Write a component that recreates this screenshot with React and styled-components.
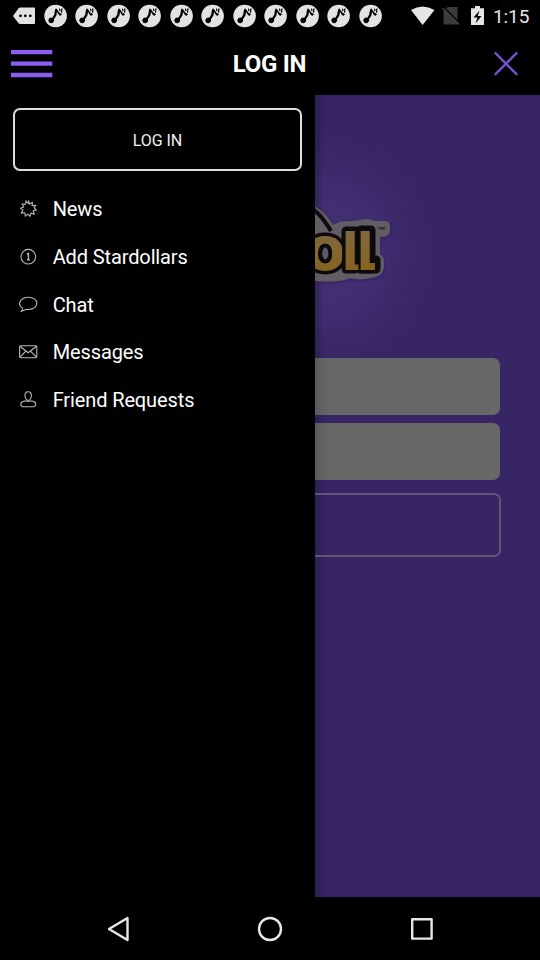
import React from "react";
import styled, { createGlobalStyle } from "styled-components";

const GlobalStyle = createGlobalStyle`
  * { box-sizing: border-box; }
  body { margin: 0; background: #000; font-family: Roboto, sans-serif; color: #fff; }
`;

const Screen = styled.div`
  width: 540px;
  height: 960px;
  display: flex;
  flex-direction: column;
  background: #000;
  overflow: hidden;
`;

const StatusBar = styled.div`
  height: 32px;
  flex: none;
  display: flex;
  align-items: center;
  padding: 0 10px 0 12px;
`;

const Notifications = styled.div`
  display: flex;
  align-items: center;
  gap: 7.5px;
  flex: 1;
  svg { display: block; flex: none; }
`;

const SystemIcons = styled.div`
  display: flex;
  align-items: center;
  svg { display: block; }
`;

const Clock = styled.span`
  font-size: 19px;
  line-height: 32px;
  color: #e6e6e6;
  margin: 1px 0 0 9px;
  width: 37px;
  letter-spacing: -0.1px;
  white-space: nowrap;
`;

const Header = styled.header`
  height: 63px;
  flex: none;
  display: grid;
  grid-template-columns: 100px 1fr 100px;
  align-items: center;
  padding: 0 22px 0 11px;
`;

const IconButton = styled.button`
  border: 0;
  padding: 0;
  background: none;
  display: flex;
  justify-content: ${(p) => (p.$end ? "flex-end" : "flex-start")};
`;

const Title = styled.h1`
  margin: 1px 0 0 10px;
  font-size: 24px;
  line-height: 32px;
  font-weight: 700;
  letter-spacing: -0.3px;
  text-align: center;
`;

const Body = styled.main`
  height: 802px;
  flex: none;
  display: flex;
`;

const Drawer = styled.aside`
  width: 315px;
  flex: none;
  padding: 13px 13px 0;
`;

const LoginButton = styled.button`
  display: block;
  width: 289px;
  height: 63px;
  padding: 2px 0 0;
  border: 2px solid #ddd;
  border-radius: 7px;
  background: #000;
  color: #f2f2f2;
  font: 400 16px/20px Roboto, sans-serif;
  letter-spacing: -0.05px;
`;

const Menu = styled.nav`
  margin-top: 14.7px;
`;

const MenuItem = styled.div`
  height: 47.6px;
  display: flex;
  align-items: center;
  font-size: 20px;
  letter-spacing: -0.12px;
  white-space: nowrap;
  svg { display: block; margin: 0 13.7px 0 5px; }
`;

const Content = styled.section`
  flex: 1;
  overflow: hidden;
  background:
    linear-gradient(90deg, rgba(0, 0, 0, 0.2), transparent 10px),
    radial-gradient(circle at 0 157px, #453273 0, #402c70 70px, #3a2868 95px, #372565 125px);
  svg { display: block; }
`;

const Field = styled.div`
  width: 185px;
  height: 57px;
  margin-bottom: 8px;
  border-radius: 0 7px 7px 0;
  background: linear-gradient(90deg, #5a5a5a 0, #676767 15px);
`;

const OutlineButton = styled.div`
  width: 186px;
  height: 64px;
  margin-top: 13px;
  border: 2px solid #625777;
  border-left: 0;
  border-radius: 0 7px 7px 0;
`;

const NavBar = styled.footer`
  flex: 1;
  display: flex;
  justify-content: center;
  align-items: center;
  gap: 124px;
  svg { display: block; }
`;

const Message = () => (
  <svg width="24" height="24" viewBox="0 0 24 24">
    <path d="M1 12 6.5 4.2Q7.3 3.4 8.3 3.4H22Q23 3.4 23 4.4V19.2Q23 20 22 20H8.3Q7.2 20 6.5 19.2Z" fill="#e2e2e2" />
    <circle cx="8.5" cy="11.8" r="1.4" />
    <circle cx="13.3" cy="11.8" r="1.4" />
    <circle cx="18.3" cy="11.8" r="1.4" />
  </svg>
);

const Note = () => (
  <svg width="24" height="24" viewBox="0.4 0 24 24">
    <circle cx="12" cy="12" r="11.3" fill="#e2e2e2" />
    <g fill="#000" stroke="#000" strokeLinecap="round">
      <circle cx="7.6" cy="16.4" r="2.4" />
      <path d="m8.8 15.6 2.9-4.6.8-4.6" fill="none" strokeWidth="2.3" />
      <path d="m12.5 5.4 3.3 4.6" fill="none" strokeWidth="1.6" />
      <circle cx="16.6" cy="10.4" r="0.9" />
      <path d="m16 5.2 .3 1.400m2-1.800-.3 3.400" fill="none" strokeWidth="1.2" />
    </g>
  </svg>
);

const icons = {
  News: (
    <path d="m12.7 4.400.7 3.200 3-1.900-.3 3.400 3.800-.4-1.900 2.700 2.300 2-3.200.8 1.300 3.400-3.600-.9-.8 3.200-2.200-2.300-2.500 2.100-.4-3.500-3.600.4 1.700-3-2.500-1.900 3.200-1.200-1.600-3 3.500.3.300-3.400 2.400 2.400Z" transform="translate(0 -.5)" />
  ),
  "Add Stardollars": (
    <>
      <circle cx="12.3" cy="11.7" r="7.3" />
      <path d="M10.9 9 12.4 8.300V14.700M11 14.900h3" strokeWidth="1.4" />
    </>
  ),
  Chat: (
    <path d="M6.400 15.100C.3 11.100 5.200 4.200 12.300 4.200c4.900 0 8.500 2.600 8.500 5.900 0 4.800-5.600 7.100-10.300 6.100L4.900 18.600c1-1 1.900-2.200 1.500-3.500Z" />
  ),
  Messages: (
    <>
      <rect x="3.6" y="5.7" width="17.2" height="12" rx="1.2" />
      <path d="m4 6.200 8.200 6.600 8.200-6.600M4 17.200l5.800-6.100m4.600.1 6.200 6" />
    </>
  ),
  "Friend Requests": (
    <>
      <path d="M12.200 3.700c2.200 0 3.400 1.700 3.200 4.200-.2 2.200-1.600 4.600-3.200 4.600S9.200 10.100 9 7.900c-.2-2.500 1-4.200 3.200-4.200Z" />
      <path d="M10 12.900c-3.600.3-5.200 1.300-5.200 3.300 0 1.700 1 2.500 2.400 2.500h10c1.500 0 2.500-.8 2.500-2.500 0-2-1.700-3-5.300-3.300q-2.200 1.300-4.400 0Z" />
    </>
  ),
};

const LineIcon = ({ name }) => (
  <svg width="21" height="24" viewBox="2 0 21 24" fill="none" stroke="#b8b8b8" strokeWidth="1.1" strokeLinejoin="round">
    {icons[name]}
  </svg>
);

const Logo = () => (
  <svg width="225" height="263" viewBox="0 0 225 263">
    <defs>
      <linearGradient id="gold" gradientUnits="userSpaceOnUse" x1="0" y1="134" x2="0" y2="176">
        <stop offset="0" stopColor="#80683f" />
        <stop offset="1" stopColor="#86641f" />
      </linearGradient>
      <filter id="logoShadow">
        <feDropShadow dx="0" dy="1" stdDeviation="1.5" floodColor="#241540" floodOpacity=".5" />
      </filter>
    </defs>
    <path
      d="M-8 108Q8 113 18 130L26 126.500Q42 126 47 124.500Q55 123 59 126H70Q75 126 75 132V135Q75 141 69 141.500L65 142V159Q70 162 69 172Q68 180 60 182Q43 186 35 183Q22 189-8 185Z"
      fill="#625d65"
      filter="url(#logoShadow)"
    />
    <path d="M-4 113q10 6 20 23" fill="none" stroke="#0d0a10" strokeWidth="4" />
    <path d="M31 136h10v37H31zM46 135h10v30h5v9H46z" fill="#0c0a0d" stroke="#0c0a0d" strokeWidth="9" strokeLinejoin="round" />
    <text
      x="-10.5"
      y="175"
      fontFamily="DejaVu Sans"
      fontWeight="700"
      fill="url(#gold)"
      stroke="#0c0a0d"
      strokeWidth="7"
      strokeLinejoin="round"
      paintOrder="stroke"
    >
      <tspan fontSize="60" letterSpacing="-4.4">o</tspan>
      <tspan fontSize="52" letterSpacing="-3">ll</tspan>
    </text>
    <path d="M38 169.500h5.500v5.500H38zM53 168h7v7h-7z" fill="#846220" />
    <ellipse cx="10.300" cy="158.500" rx="4.800" ry="7.800" fill="#5d586d" stroke="#0c0a0d" strokeWidth="3.500" />
    <text x="62" y="137.500" fontFamily="Liberation Sans" fontWeight="700" fontSize="9" textLength="8.500" lengthAdjust="spacingAndGlyphs" fill="#171317">™</text>
  </svg>
);

export default function App() {
  return (
    <Screen>
      <GlobalStyle />
      <StatusBar>
        <Notifications>
          <Message />
          {Array.from({ length: 11 }, (_, i) => <Note key={i} />)}
        </Notifications>
        <SystemIcons>
          <svg width="75" height="26" viewBox="409 3 75 26">
            <path d="M411 10q11.500-7 23.500 0L422.600 25Z" fill="#e6e6e6" />
            <path d="M443.500 9.500 448 7h9.500v17.500h-14Z" fill="#3b3b3b" />
            <path d="M443.500 7 461 24.500" stroke="#000" strokeWidth="1.500" />
            <path d="M442.500 8 459 24.500" stroke="#444" strokeWidth="1.400" />
            <path d="M471 8.300h4V6h5v2.300h4v16.800h-13Z" fill="#e6e6e6" />
            <path d="m479.500 10.500-6 7h4l-2 6 6-7.500h-3.800Z" fill="#000" />
          </svg>
          <Clock>1:15</Clock>
        </SystemIcons>
      </StatusBar>
      <Header>
        <IconButton aria-label="Menu">
          <svg width="42" height="28" viewBox="0 0 42 28" fill="#8a5cf0">
            <path d="M0 0h41.300v4.300H0zM0 11.400h41.300v4.400H0zM0 22.800h41.300v4.400H0z" />
          </svg>
        </IconButton>
        <Title>LOG IN</Title>
        <IconButton $end aria-label="Close">
          <svg width="24" height="24" viewBox="0 0 24 24" stroke="#7252c9" strokeWidth="2.4" strokeLinecap="round">
            <path d="m1.500 1.200 21 21M22.500 1.200l-21 21" />
          </svg>
        </IconButton>
      </Header>
      <Body>
        <Drawer>
          <LoginButton>LOG IN</LoginButton>
          <Menu>
            {Object.keys(icons).map((name) => (
              <MenuItem key={name}><LineIcon name={name} />{name}</MenuItem>
            ))}
          </Menu>
        </Drawer>
        <Content>
          <Logo />
          <Field />
          <Field />
          <OutlineButton />
        </Content>
      </Body>
      <NavBar>
        <svg width="28" height="28" viewBox="0 0 28 28" fill="none" stroke="#e8e8e8" strokeWidth="2.4" strokeLinejoin="round">
          <path d="M5 14 23.500 3v22Z" />
        </svg>
        <svg width="28" height="28" viewBox="0 0 28 28" fill="none" stroke="#e8e8e8" strokeWidth="2.4">
          <circle cx="14" cy="14" r="11" />
        </svg>
        <svg width="28" height="28" viewBox="0 0 28 28" fill="none" stroke="#e8e8e8" strokeWidth="2.4" strokeLinejoin="round">
          <rect x="4.200" y="4.200" width="19.400" height="19.400" />
        </svg>
      </NavBar>
    </Screen>
  );
}
